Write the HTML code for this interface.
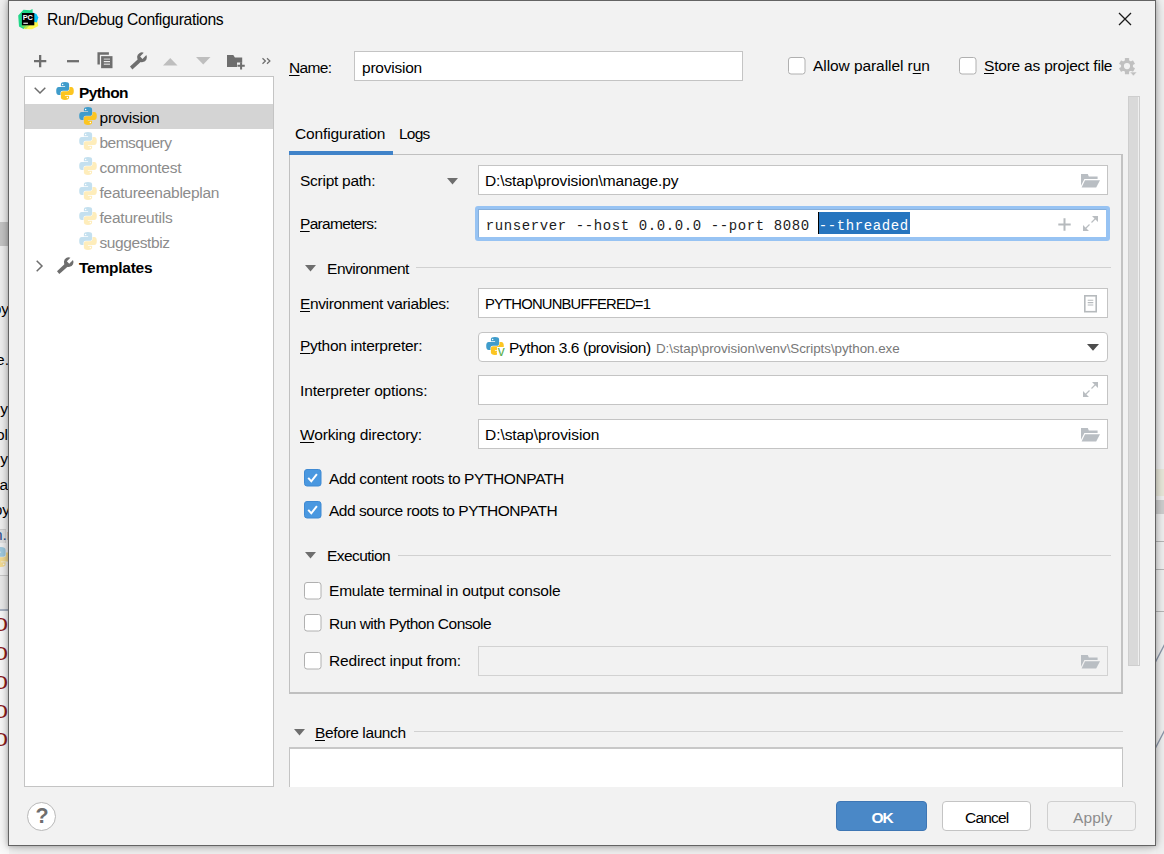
<!DOCTYPE html>
<html><head><meta charset="utf-8"><title>Run/Debug Configurations</title>
<style>
html,body{margin:0;padding:0}
body{width:1164px;height:854px;overflow:hidden;position:relative;background:#f4f4f4;font-family:"Liberation Sans",sans-serif;font-size:15px;color:#000}
.a{position:absolute}
.t{position:absolute;white-space:nowrap;line-height:18px;font-size:15.500px}
.g{color:#8c8c8c}
.b{font-weight:bold}
u{text-decoration:underline;text-underline-offset:1.500px;text-decoration-thickness:1px}
.f{position:absolute;box-sizing:border-box;background:#fff;border:1px solid #c4c4c4;height:30px}
.cb{position:absolute;box-sizing:border-box;width:17.500px;height:17.500px;border:1px solid #b0b0b0;border-radius:3px;background:#fff}
.cb.on{background:#4a98e0;border-color:#3f8bd6}
.ln{position:absolute;height:1px;background:#d1d1d1}
.mono{font-family:"Liberation Mono",monospace}
svg{position:absolute;overflow:visible}
</style></head><body>
<svg width="0" height="0" style="position:absolute">
<defs>
<symbol id="py" viewBox="0 0 18 18">
<path id="pyh" fill="#3f9ccb" d="M9 0C6.200 0 4.900.8 4.900 2.400V4.300H9.100V4.900H2.800C1 4.900.2 6.400.2 9S1 13.100 2.800 13.100H4.500V10.900C4.500 9.600 5.500 8.850 6.800 8.850H11C12.200 8.850 13.100 8 13.100 6.800V2.400C13.100.8 11.600 0 9 0z"/>
<circle cx="6.600" cy="2.400" r=".75" fill="#fff"/>
<g transform="rotate(180 9 9)"><path fill="#fcc521" d="M9 0C6.200 0 4.900.8 4.900 2.400V4.300H9.100V4.900H2.800C1 4.900.2 6.400.2 9S1 13.100 2.800 13.100H4.500V10.900C4.500 9.600 5.500 8.850 6.800 8.850H11C12.200 8.850 13.100 8 13.100 6.800V2.400C13.100.8 11.600 0 9 0z"/>
<circle cx="6.600" cy="2.400" r=".75" fill="#fff"/></g>
</symbol>
<symbol id="fold" viewBox="0 0 20 16">
<path fill="#b9bec3" d="M0 0h6.800l1 2.500h8.800v2.400H3.400L0 11.800z"/>
<path fill="#b9bec3" d="M4 6.300h15l-3.800 7.300H.6z"/>
</symbol>
<symbol id="tri" viewBox="0 0 11 7"><path fill="#6e6e6e" d="M0 0h11L5.500 6.500z"/></symbol>
<symbol id="exp" viewBox="0 0 15 15">
<path fill="#b9bdc1" d="M9 0h6v6zM0 9v6h6z"/>
<path d="M13 2L8.500 6.500M2 13l4.500-4.500" stroke="#b9bdc1" stroke-width="1.200" fill="none"/>
</symbol>
</defs></svg>

<!-- background IDE fragments -->
<div id="bgl" class="a" style="left:0;top:0;width:9px;height:854px;background:#f2f2f2;overflow:hidden">
<div class="a" style="left:0;top:222px;width:9px;height:24px;background:#c6c6c6"></div>
<span class="t" style="right:0;top:300px">py</span>
<span class="t" style="right:0;top:351px">e.</span>
<span class="t" style="right:1px;top:400px">y</span>
<span class="t" style="right:1px;top:426px">ol</span>
<span class="t" style="right:1px;top:450px">y</span>
<span class="t" style="right:1px;top:476px">a</span>
<span class="t" style="right:-1px;top:501px">py</span>
<div class="a" style="left:0;top:529px;width:5px;height:13px;background:#e2e2e2;border-top:1px solid #cfcfcf;border-right:1px solid #d8d8d8"></div>
<span class="t" style="right:-3px;top:526px;color:#2b4c8c">n.r</span>
<svg style="left:-9px;top:547px;opacity:.45" width="20" height="20"><use href="#py"/></svg>
<div class="a" style="left:0;top:575px;width:9px;height:34px;background:#ececec;border-top:1px solid #c9c9c9"></div>
<div class="a" style="left:0;top:609px;width:9px;height:2px;background:#aab3c3"></div>
<div class="a" style="left:0;top:611px;width:9px;height:243px;background:#fbfbfb"></div>
<span class="t" style="right:1px;top:614px;font-size:18px;line-height:22px;color:#8e1c1c;transform:scaleX(1.450);transform-origin:100% 50%">0</span>
<span class="t" style="right:1px;top:643px;font-size:18px;line-height:22px;color:#8e1c1c;transform:scaleX(1.450);transform-origin:100% 50%">0</span>
<span class="t" style="right:1px;top:672px;font-size:18px;line-height:22px;color:#8e1c1c;transform:scaleX(1.450);transform-origin:100% 50%">0</span>
<span class="t" style="right:1px;top:701px;font-size:18px;line-height:22px;color:#8e1c1c;transform:scaleX(1.450);transform-origin:100% 50%">0</span>
<span class="t" style="right:1px;top:729px;font-size:18px;line-height:22px;color:#8e1c1c;transform:scaleX(1.450);transform-origin:100% 50%">0</span>
</div>
<div id="bgr" class="a" style="left:1156px;top:0;width:8px;height:854px;background:#f2f2f2;overflow:hidden">
<div class="a" style="left:0;top:469px;width:8px;height:27px;background:#ebeadc"></div>
<div class="a" style="left:0;top:500px;width:8px;height:14px;background:#d0d0d0"></div>
<div class="a" style="left:0;top:541px;width:8px;height:1px;background:#b8b8b8"></div>
<div class="a" style="left:0;top:569px;width:8px;height:1px;background:#b8b8b8"></div>
<div class="a" style="left:0;top:611px;width:8px;height:1px;background:#b8b8b8"></div>
<svg style="left:0;top:0" width="8" height="854"><path d="M-.5 662L8.500 644.500M-.5 748L8.500 730.500" stroke="#8d98ab" stroke-width="1.300" fill="none"/></svg>
</div>

<!-- dialog -->
<div id="dlg" class="a" style="left:8px;top:0;width:1148px;height:846px;box-sizing:border-box;border:1px solid #646464;background:#f2f2f2;box-shadow:0 0 5px 0 rgba(0,0,0,.28),0 1px 14px 0 rgba(0,0,0,.22)"></div>

<!-- title bar -->
<svg class="a" style="left:18px;top:8.700px" width="20.300" height="20.300" viewBox="0 0 20.300 20.300">
<path fill="#21d789" d="M.2 6.500L5.500 .8 12 1.300 14.500 0 15 8 9 19.500 5.500 20 1 17.500z"/>
<path fill="#fcf84a" d="M5.500 20L12 12l7.500.5.800 4.500-6.300 3.300z"/>
<path fill="#07c3f2" d="M14.500 3.500l4 1.500 1.800 3.500-1.500 5-4.300-1z"/>
<path fill="#8fe04f" d="M3 17l5-4 4 3-4 4z" opacity=".7"/>
<rect x="3.900" y="4" width="12.400" height="12.300" fill="#000"/>
<text x="4.800" y="10.900" font-family="Liberation Sans,sans-serif" font-weight="bold" font-size="7.400" letter-spacing="-.3" fill="#fff">PC</text>
<rect x="5.300" y="13.700" width="4.600" height="1.100" fill="#fff"/>
</svg>
<span class="t" style="left:47px;top:11px;font-size:15.700px;letter-spacing:-0.36px">Run/Debug Configurations</span>
<svg style="left:1118px;top:12px" width="14" height="14" viewBox="0 0 14 14"><path d="M1 1L13 13M13 1L1 13" stroke="#1a1a1a" stroke-width="1.300" fill="none"/></svg>

<!-- toolbar -->
<svg style="left:33.800px;top:54.800px" width="12.300" height="12.300" viewBox="0 0 12.300 12.300"><path d="M6.150 0v12.300M0 6.150h12.300" stroke="#6e6e6e" stroke-width="2.300" fill="none"/></svg>
<svg style="left:67px;top:59.800px" width="12" height="2.400" viewBox="0 0 12 2.400"><path d="M0 1.200h12" stroke="#6e6e6e" stroke-width="2.300" fill="none"/></svg>
<svg style="left:97px;top:52px" width="17" height="17" viewBox="0 0 17 17">
<path d="M1.650 12.600V1.450h10.250" fill="none" stroke="#6e6e6e" stroke-width="2.400"/>
<rect x="4.100" y="4.150" width="11.400" height="12.050" fill="#6e6e6e"/>
<path d="M6.800 7.100h6.200M6.800 12.200h6.200" stroke="#c6c6c6" stroke-width="1.400"/><path d="M6.800 9.600h6.200" stroke="#ececec" stroke-width="1.200"/>
</svg>
<svg id="wr1" style="left:129px;top:52px" width="19" height="19" viewBox="0 0 19 19">
<path fill="#6e6e6e" d="M14.750 .7L11.100 4.400l2.400 2.500L17.350 3.020A4.900 4.900 0 1 1 14.750 .7z"/><path fill="#6e6e6e" d="M1 14.600l2.400 2.800 9.300-8.300-2.700-2.900z"/>
</svg>
<svg style="left:162.700px;top:57.600px" width="14.500" height="7.400" viewBox="0 0 14.500 7.400"><path fill="#bebebe" d="M0 7.400L7.250 0l7.250 7.400z"/></svg>
<svg style="left:195.700px;top:57px" width="14.500" height="7.400" viewBox="0 0 14.500 7.400"><path fill="#bebebe" d="M0 0h14.500L7.250 7.400z"/></svg>
<svg style="left:227.400px;top:54.800px" width="19" height="16" viewBox="0 0 19 16">
<path fill="#6e6e6e" d="M0 0h6.300l1.600 2.400h7.300v5H10v4.700H0z"/>
<path d="M14.100 7.150v7.300M10.450 10.800h7.300" stroke="#6e6e6e" stroke-width="2" fill="none"/>
</svg>
<svg style="left:261.800px;top:58px" width="8.600" height="6.100" viewBox="0 0 8.600 6.100"><path d="M.5.300l2.900 2.750L.5 5.800M5 .3l2.900 2.750L5 5.800" stroke="#6e6e6e" stroke-width="1.250" fill="none"/></svg>

<!-- tree -->
<div class="a" style="left:24px;top:76px;width:250px;height:711px;box-sizing:border-box;border:1px solid #c4c4c4;background:#fff"></div>
<div class="a" style="left:25px;top:104px;width:248px;height:25px;background:#d4d4d4"></div>
<svg style="left:34px;top:87px" width="12" height="7" viewBox="0 0 12 7"><path d="M.7.700L6 6l5.300-5.300" stroke="#6e6e6e" stroke-width="1.500" fill="none"/></svg>
<svg style="left:56px;top:82px" width="18" height="18"><use href="#py"/></svg>
<span class="t b" style="left:79px;top:84px;letter-spacing:-0.59px">Python</span>
<svg style="left:79px;top:107px" width="18" height="18"><use href="#py"/></svg>
<span class="t" style="left:99.500px;top:109px;letter-spacing:-0.23px">provision</span>
<svg style="left:79px;top:132px;opacity:.3" width="18" height="18"><use href="#py"/></svg>
<span class="t g" style="left:99.500px;top:134px;letter-spacing:-0.52px">bemsquery</span>
<svg style="left:79px;top:157px;opacity:.3" width="18" height="18"><use href="#py"/></svg>
<span class="t g" style="left:99.500px;top:159px;letter-spacing:-0.27px">commontest</span>
<svg style="left:79px;top:182px;opacity:.3" width="18" height="18"><use href="#py"/></svg>
<span class="t g" style="left:99.500px;top:184px;letter-spacing:-0.26px">featureenableplan</span>
<svg style="left:79px;top:207px;opacity:.3" width="18" height="18"><use href="#py"/></svg>
<span class="t g" style="left:99.500px;top:209px;letter-spacing:-0.24px">featureutils</span>
<svg style="left:79px;top:232px;opacity:.3" width="18" height="18"><use href="#py"/></svg>
<span class="t g" style="left:99.500px;top:234px;letter-spacing:-0.4px">suggestbiz</span>
<svg style="left:36px;top:260px" width="7" height="12" viewBox="0 0 7 12"><path d="M.7.700L6 6 .7 11.300" stroke="#6e6e6e" stroke-width="1.500" fill="none"/></svg>
<svg id="wr2" style="left:55.700px;top:256.800px" width="18.600" height="18.600" viewBox="0 0 19 19">
<path fill="#6e6e6e" d="M14.750 .7L11.100 4.400l2.400 2.500L17.350 3.020A4.900 4.900 0 1 1 14.750 .7z"/><path fill="#6e6e6e" d="M1 14.600l2.400 2.800 9.300-8.300-2.700-2.900z"/>
</svg>
<span class="t b" style="left:79px;top:259px;letter-spacing:-0.24px">Templates</span>

<!-- help -->
<div class="a" style="left:27px;top:802px;width:29px;height:29px;box-sizing:border-box;border:1px solid #b8b8b8;border-radius:50%;background:#fff"></div>
<span class="t b" style="left:35.500px;top:804px;font-size:21.500px;line-height:24px;color:#6e6e6e">?</span>

<!-- name row -->
<span class="t" style="left:289px;top:59px;letter-spacing:-0.63px"><u>N</u>ame:</span>
<div class="f" style="left:354px;top:51px;width:389px"></div>
<span class="t" style="left:362px;top:59px;letter-spacing:-0.23px">provision</span>
<svg style="left:787.75px;top:56.75px" width="17.500" height="17.500" viewBox="0 0 17.500 17.500"><rect x=".5" y=".5" width="16.500" height="16.500" rx="2.500" fill="#fff" stroke="#b0b0b0"/></svg>
<span class="t" style="left:813px;top:57px;letter-spacing:-0.07px">Allow parallel r<u>u</u>n</span>
<svg style="left:958.75px;top:56.75px" width="17.500" height="17.500" viewBox="0 0 17.500 17.500"><rect x=".5" y=".5" width="16.500" height="16.500" rx="2.500" fill="#fff" stroke="#b0b0b0"/></svg>
<span class="t" style="left:984px;top:57px;letter-spacing:-0.21px"><u>S</u>tore as project file</span>
<svg id="gear" style="left:1119px;top:58px" width="18" height="18" viewBox="0 0 18 18">
<g transform="translate(8 8.100)" fill="#c0c0c0">
<circle r="6"/>
<rect x="-2.100" y="-8.100" width="4.200" height="16.200" rx=".5"/><rect x="-2.100" y="-8.100" width="4.200" height="16.200" rx=".5" transform="rotate(60)"/><rect x="-2.100" y="-8.100" width="4.200" height="16.200" rx=".5" transform="rotate(120)"/>
<circle r="3.100" fill="#f2f2f2"/>
</g>
<path fill="#c0c0c0" stroke="#f2f2f2" stroke-width=".6" d="M10.800 14h7.200l-3.600 4z"/>
</svg>

<!-- scrollbar -->
<div class="a" style="left:1128px;top:96px;width:12px;height:570px;box-sizing:border-box;background:linear-gradient(to right,#d9d9d9 8.500px,#efefef 8.500px);border:1px solid #cecece"></div>

<!-- tabs -->
<span class="t" style="left:295px;top:125px;letter-spacing:-0.15px">Configuration</span>
<span class="t" style="left:399px;top:125px;letter-spacing:-0.78px">Logs</span>
<div class="a" style="left:289px;top:154px;width:834px;height:540px;box-sizing:border-box;border:1px solid #c0c0c0;border-bottom:2px solid #c0c0c0;border-right:2px solid #c3c3c3"></div>
<div class="a" style="left:289px;top:151px;width:104px;height:4px;background:#4083c9"></div>

<!-- script path -->
<span class="t" style="left:300px;top:172px;letter-spacing:-0.26px">Script path:</span>
<svg style="left:446.500px;top:177.500px" width="11" height="7"><use href="#tri"/></svg>
<div class="f" style="left:478px;top:165px;width:630px"></div>
<span class="t" style="left:485px;top:172px;letter-spacing:-0.11px">D:\stap\provision\manage.py</span>
<svg style="left:1081px;top:174px" width="20" height="16"><use href="#fold"/></svg>

<!-- parameters -->
<span class="t" style="left:300px;top:214.500px;letter-spacing:-0.68px"><u>P</u>arameters:</span>
<div class="a" style="left:475px;top:206.300px;width:635px;height:34.500px;box-sizing:border-box;border-radius:3px;background:#97c3f3"></div>
<div class="a" style="left:477.500px;top:209px;width:629px;height:29px;box-sizing:border-box;border:1px solid #87afda;border-right-color:#97c3f3;border-bottom-color:#97c3f3;background:#fff"></div>
<div class="a" style="left:818px;top:212px;width:92px;height:22px;background:#2675bf"></div>
<div class="a" style="left:818px;top:212px;width:1px;height:22px;background:#000"></div>
<span class="t mono" style="left:485.800px;top:217px;font-size:14px;letter-spacing:.6px;color:#1c1c1c">runserver --host 0.0.0.0 --port 8080 <span style="color:#fff">--threaded</span></span>
<svg style="left:1057.500px;top:217.500px" width="13" height="13" viewBox="0 0 13 13"><path d="M6.500 .3v12.400M.3 6.500h12.400" stroke="#b6babd" stroke-width="2" fill="none"/></svg>
<svg style="left:1082.500px;top:216.200px" width="15" height="15"><use href="#exp"/></svg>

<!-- environment -->
<svg style="left:304.500px;top:265px" width="11" height="7"><use href="#tri"/></svg>
<span class="t" style="left:327px;top:259.500px;letter-spacing:-0.46px">Environment</span>
<div class="ln" style="left:416px;top:267px;width:695px"></div>

<span class="t" style="left:300px;top:294.500px;letter-spacing:-0.37px"><u>E</u>nvironment variables:</span>
<div class="f" style="left:478px;top:288px;width:630px"></div>
<span class="t" style="left:485px;top:295px;font-size:14.800px;letter-spacing:-0.81px">PYTHONUNBUFFERED=1</span>
<svg style="left:1084px;top:294.500px" width="13" height="17.500" viewBox="0 0 13 17.500"><rect x=".8" y=".8" width="11.400" height="15.900" fill="none" stroke="#b6babd" stroke-width="1.600"/><path d="M3.700 5.200h5.600M3.700 7.600h5.600M3.700 10h5.600" stroke="#b6babd" stroke-width="1.100"/></svg>

<span class="t" style="left:300px;top:337px;letter-spacing:-0.28px"><u>P</u>ython interpreter:</span>
<div class="f" style="left:478px;top:332px;width:630px;border-radius:4px"></div>
<svg style="left:486px;top:337px" width="18" height="18"><use href="#py"/></svg>
<div class="a" style="left:497px;top:347px;width:9px;height:10px;background:#fff"></div>
<span class="t" style="left:497.800px;top:344px;font-size:14px;line-height:14px;color:#5aaf4e">v</span>
<span class="t" style="left:509px;top:338.500px;letter-spacing:-0.41px">Python 3.6 (provision)</span>
<span class="t" style="left:656px;top:339.500px;font-size:13.400px;color:#787878;letter-spacing:-0.05px">D:\stap\provision\venv\Scripts\python.exe</span>
<svg style="left:1087px;top:343.500px" width="12" height="7" viewBox="0 0 12 7"><path fill="#4d4d4d" d="M0 0h12L6 6.800z"/></svg>

<span class="t" style="left:300px;top:381.500px;letter-spacing:-0.14px">Interpreter options:</span>
<div class="f" style="left:478px;top:375px;width:630px"></div>
<svg style="left:1082.500px;top:382.200px" width="15" height="15"><use href="#exp"/></svg>

<span class="t" style="left:300px;top:426px;letter-spacing:-0.15px"><u>W</u>orking directory:</span>
<div class="f" style="left:478px;top:419px;width:630px"></div>
<span class="t" style="left:485px;top:426px;letter-spacing:-0.06px">D:\stap\provision</span>
<svg style="left:1081px;top:428px" width="20" height="16"><use href="#fold"/></svg>

<!-- checkboxes -->
<svg style="left:303.75px;top:468.5px" width="17.500" height="17.500" viewBox="0 0 17.500 17.500"><rect x=".5" y=".5" width="16.500" height="16.500" rx="2.500" fill="#4a98e0" stroke="#3f8ad3"/><path d="M4.200 8.900l3.100 3.400 5.600-7.200" stroke="#fff" stroke-width="2" fill="none"/></svg>
<span class="t" style="left:329px;top:470px;letter-spacing:-0.38px">Add content roots to PYTHONPATH</span>
<svg style="left:303.75px;top:501.25px" width="17.500" height="17.500" viewBox="0 0 17.500 17.500"><rect x=".5" y=".5" width="16.500" height="16.500" rx="2.500" fill="#4a98e0" stroke="#3f8ad3"/><path d="M4.200 8.900l3.100 3.400 5.600-7.200" stroke="#fff" stroke-width="2" fill="none"/></svg>
<span class="t" style="left:329px;top:502px;letter-spacing:-0.47px">Add source roots to PYTHONPATH</span>

<!-- execution -->
<svg style="left:304.500px;top:552px" width="11" height="7"><use href="#tri"/></svg>
<span class="t" style="left:327px;top:547px;letter-spacing:-0.56px">Execution</span>
<div class="ln" style="left:398px;top:555px;width:713px"></div>
<svg style="left:303.75px;top:581.5px" width="17.500" height="17.500" viewBox="0 0 17.500 17.500"><rect x=".5" y=".5" width="16.500" height="16.500" rx="2.500" fill="#fff" stroke="#b0b0b0"/></svg>
<span class="t" style="left:329px;top:582px;letter-spacing:-0.19px">Emulate terminal in output console</span>
<svg style="left:303.75px;top:613.5px" width="17.500" height="17.500" viewBox="0 0 17.500 17.500"><rect x=".5" y=".5" width="16.500" height="16.500" rx="2.500" fill="#fff" stroke="#b0b0b0"/></svg>
<span class="t" style="left:329px;top:614.500px;letter-spacing:-0.52px">Run with Python Console</span>
<svg style="left:303.75px;top:651.5px" width="17.500" height="17.500" viewBox="0 0 17.500 17.500"><rect x=".5" y=".5" width="16.500" height="16.500" rx="2.500" fill="#fff" stroke="#b0b0b0"/></svg>
<span class="t" style="left:329px;top:652px;letter-spacing:-0.17px">Redirect input from:</span>
<div class="f" style="left:478px;top:646px;width:630px;background:#f2f2f2;border-color:#d2d2d2"></div>
<svg style="left:1081px;top:655px" width="20" height="16"><use href="#fold"/></svg>

<!-- before launch -->
<svg style="left:293.500px;top:728.500px" width="11" height="7"><use href="#tri"/></svg>
<span class="t" style="left:315px;top:724px;letter-spacing:-0.38px"><u>B</u>efore launch</span>
<div class="ln" style="left:414px;top:731px;width:709px"></div>
<div class="a" style="left:289px;top:747px;width:834px;height:40px;box-sizing:border-box;border:1px solid #c4c4c4;border-top:2px solid #c8c8c8;border-bottom:none;background:#fff"></div>

<!-- buttons -->
<div class="a" style="left:836px;top:801px;width:91px;height:30px;box-sizing:border-box;border:1px solid #3e76b4;border-radius:4px;background:#4a88c7"></div>
<span class="t b" style="left:871.500px;top:808.500px;color:#fff;letter-spacing:-1.12px">OK</span>
<div class="a" style="left:942px;top:801px;width:89px;height:30px;box-sizing:border-box;border:1px solid #c4c4c4;border-radius:4px;background:#fff"></div>
<span class="t" style="left:965px;top:808.500px;letter-spacing:-0.79px">Cancel</span>
<div class="a" style="left:1047px;top:801px;width:89px;height:30px;box-sizing:border-box;border:1px solid #cfcfcf;border-radius:4px;background:#f2f2f2"></div>
<span class="t g" style="left:1073px;top:808.500px;letter-spacing:0.09px">Apply</span>

</body></html>
